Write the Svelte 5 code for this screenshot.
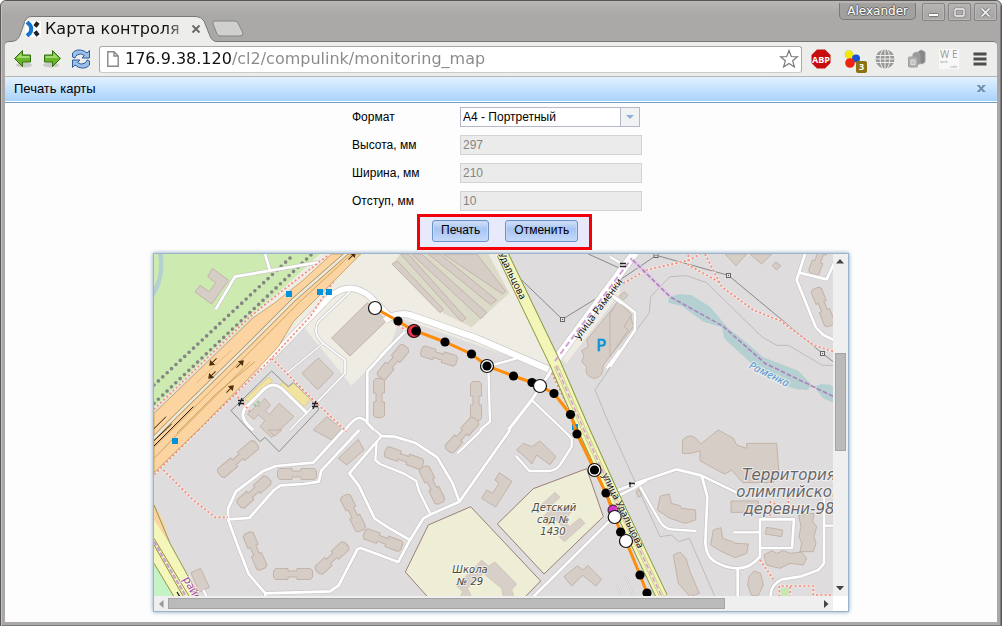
<script>
  const tiles = { A: [150, 250], B: [380, 250], C: [610, 250], D: [150, 430], E: [380, 430], F: [610, 430] };
  const place = (t) => `translate(${tiles[t][0]} ${tiles[t][1]}) scale(0.33333)`;

  const areas = [
    ['A', 'M12 12H510L400 115L310 198L12 480Z', '#cdebb0'],
    ['A', 'M12 12H38Q48 90 12 140Z', '#b5d0d0'],
    ['A', 'M12 12H24Q34 70 12 110Z', '#cdebb0'],
    ['A', 'M510 12H1045L1210 365L750 205L720 290L605 407L460 230L380 280L310 198L400 115Z', '#efece4'],
    ['B', 'M60 12H325L388 130L275 232L190 190L40 40Z', '#dcdac9'],
    ['B', 'M720 80L530 315L560 340L720 130Z', '#efece4'],
    ['C', 'M178 140L210 132L245 136L300 170L340 218L355 235L400 270L460 322L565 362L606 405L592 420L560 418L520 405L460 372L380 300L342 265L336 232L280 215L245 190L215 168L174 158Z', '#b4d0d0'],
    ['C', 'M612 410L635 402L660 404L680 415V462L640 445Z', '#b4d0d0'],
    ['D', 'M12 260L60 340L150 500H70L12 400Z', '#f4f6bb'],
    ['D', 'M12 225L42 275L55 335L12 270Z', '#fcd4a2'],
    ['D', 'M12 400L70 500H12Z', '#c6f3c6']
  ];

  const buildings = [
    ['A', 'M187 55L236 91L185 162L135 126L150 106L178 125L197 98L173 80Z'],
    ['A', 'M545 264L652 158L710 212L600 318Z'],
    ['A', 'M456 370L505 324L551 370L503 419Z'],
    ['A', 'M345 446L361 465L346 483L358 494L387 460L432 500L365 562L330 530L345 512L325 494L312 508L292 492Z'],
    ['A', 'M490 540L530 500L575 535L545 570Z'],
    ['B', 'M52 33L190 178L180 188L36 42Z'],
    ['B', 'M62 12H85L258 205L245 215Z'],
    ['B', 'M95 12H125L320 188L303 206Z'],
    ['B', 'M145 12H180L350 150L332 164Z'],
    ['B', 'M190 12H290L377 124L368 132Z'],
    ['B', 'M715 155L750 190L760 230L670 345Q670 385 640 385Q612 378 620 350L605 335L612 320L605 302L625 290L620 270Z'],
    ['C', 'M25 150L65 195L42 230L55 240L0 320V190Z'],
    ['C', 'M42 125L54 136L40 150L29 138Z'],
    ['C', 'M345 12H410L378 47Z'],
    ['C', 'M420 12H485L455 42Z'],
    ['C', 'M497 36L512 47L500 60L487 47Z'],
    ['D', 'M565 85L625 28L642 60L590 105Z'],
    ['D', 'M123 428L152 415L178 472L148 486Z'],
    ['D', 'M355 0L375 18L395 0Z'],
    ['E', 'M410 60L430 40L455 50L480 33L528 80L510 104L470 75L455 102L435 80Z'],
    ['E', 'M358 128L396 154L347 231L305 205L320 180L338 190L357 160L345 150Z'],
    ['E', 'M552 440L592 407L608 420L624 407L665 448L648 468L608 436L575 468Z'],
    ['F', 'M218 30Q245 0 272 42L325 0L370 25L380 45L410 55V40H500L507 130L490 158H398L365 120L345 132L330 125L270 92V62L245 70H217Z'],
    ['F', 'M363 213H445V247H363Z'],
    ['F', 'M151 198L178 192L184 220L212 228L215 235L257 240V270L225 280L180 265L142 240Z'],
    ['F', 'M310 300L333 293L338 325L368 335L375 340L415 342L410 370L375 383L330 362L302 345Z'],
    ['F', 'M190 375L210 366L228 385L240 425L268 490L240 500L205 460Z'],
    ['F', 'M417 440L432 423L452 430L460 465L445 497H425L413 465Z'],
    ['F', 'M470 292L518 300L515 320L466 312Z'],
    ['F', 'M566 255L612 250L608 275L620 290L612 320L618 340L610 365H570L575 340L567 320L573 290Z'],
    ['F', 'M462 375L485 362L500 370L520 362L540 370L575 366L590 385L580 405L540 400L510 415L470 405Z'],
    ['F', 'M78 184L88 180L95 196L85 202Z']
  ];

  const blocks = [
    [379, 398, 39, 90], [393, 362, 40, -50], [439, 356, 37, 17], [476, 401, 39, 90], [462, 435, 42, -48],
    [404, 458, 40, 20], [432, 485, 40, 64], [254, 492, 40, -42], [297, 474, 39, 0], [255, 551, 39, 67],
    [293, 574, 39, 0], [332, 558, 40, -43], [353, 513, 39, 64], [383, 540, 40, 20], [238, 459, 48, -40],
    [823, 307, 40, 68], [819, 258, 34, 110]
  ];

  const roads = [
    ['A', 'M197 178L255 80L360 62L545 30', 8], ['A', 'M345 12L360 62', 8],
    ['A', 'M330 355L400 285L540 140Q600 90 660 140L720 200', 17],
    ['A', 'M600 125L505 215Q485 250 520 280L585 330V370L420 540', 5], ['A', 'M520 280L410 370', 4],
    ['A', 'M310 540Q260 500 290 470L345 415Q370 395 395 415L472 490', 9],
    ['A', 'M720 290L652 365V515L635 505Q620 495 585 540', 8], ['A', 'M648 515L672 540', 8],
    ['B', 'M15 212Q50 185 90 195L290 265L505 358', 19], ['B', 'M0 320L75 245', 8],
    ['B', 'M525 340L505 375L455 450L385 540', 9], ['B', 'M455 450L550 540', 7],
    ['B', 'M325 355L330 515L300 540', 7], ['B', 'M320 350L410 325', 7], ['B', 'M520 340L765 8', 24],
    ['B', 'M680 355L720 300', 8], ['B', 'M690 135L725 160', 7],
    ['C', 'M0 130L75 188V240L0 350', 8], ['C', 'M0 20L30 38', 7],
    ['C', 'M585 12L560 90L618 233L640 255L672 270', 8], ['C', 'M567 68L650 88L672 40', 8],
    ['D', 'M580 0L490 98L378 108L338 124L258 184L234 236V268L264 350L296 432L346 490L540 484L566 466L622 358L632 354L745 396L780 330', 8],
    ['D', 'M234 268L298 264L372 180L392 166L460 162L506 155L514 122L628 0', 8],
    ['D', 'M680 35L598 130L626 166L674 266L720 296L780 330', 8],
    ['D', 'M675 0L695 18L680 35L676 90L690 102L760 130L798 152L808 185L840 250', 7],
    ['D', 'M346 490V500', 8], ['D', 'M160 480L170 500', 7],
    ['E', 'M0 18L45 20L105 38L172 82L218 160L238 215', 8],
    ['E', 'M90 330L130 265L148 255L238 215L390 0', 8], ['E', 'M305 0L232 70', 7],
    ['E', 'M550 0L575 25V50L540 105Q525 124 500 123H448L408 78', 7], ['E', 'M460 500L700 262', 8],
    ['F', 'M0 190L90 155L200 118L275 137L385 190', 8],
    ['F', 'M275 137L292 200L286 340Q290 380 312 393Q345 415 385 415Q420 415 450 380V268H552L546 354H450', 8],
    ['F', 'M450 307H370', 7], ['F', 'M383 415V500', 8], ['F', 'M90 170L150 275Q165 298 185 298L258 303', 7],
    ['F', 'M0 210L70 175L110 150', 8], ['F', 'M642 200V400L625 420L570 440L515 448Q480 465 482 500', 8],
    ['F', 'M642 287H672', 7], ['F', 'M20 465L35 500', 2], ['F', 'M45 440L70 495', 2]
  ];

  const redPaths = [
    ['A', 'M12 478L300 200L400 120L535 15'], ['A', 'M145 540L320 370L365 325L480 200L550 95'],
    ['A', 'M365 325L500 460L590 545'], ['A', 'M255 430L300 485'],
    ['D', 'M145 0L12 135'], ['D', 'M40 120L130 210L195 262H234'],
    ['C', 'M40 100L110 60L240 30L270 12M285 12L335 110L430 180L510 212L610 285L672 305M235 15V45L325 95'],
    ['B', 'M515 370L598 540'], ['B', 'M55 225L75 240'],
    ['F', 'M450 390L490 448M508 500V468H610V495H672M535 200V225M540 470V497M478 215L505 225M480 225V260']
  ];

  const greyLines = [
    ['B', 'M425 90L547 208L690 120', '#8a8a8a', 3], ['C', 'M0 110L139 16L355 76L637 310L672 337', '#8a8a8a', 3],
    ['B', 'M625 12L720 55', '#8a8a8a', 3],
    ['C', 'M80 240L118 188L122 140L180 80L230 77L290 98L455 260L500 286H535L637 346H672', '#bdbbbb', 3],
    ['A', 'M243 482L365 363L415 410L430 397L505 470V480L387 605L345 562L330 575Z', '#8f8f8f', 3],
    ['F', 'M5 0L150 320L185 315L205 335L238 325L315 500', '#bdbbbb', 3],
    ['B', 'M720 310L645 420L695 540', '#bdbbbb', 3]
  ];

  const route = [
    [375, 308, 'open'], [398, 321, 'dot'], [414, 331, 'red'], [416, 331, 'dot'], [445, 342, 'dot'], [471.5, 354, 'dot'],
    [487, 366, 'ring'], [513.5, 376, 'dot'], [532, 382.5, 'dot'], [540, 386, 'open'], [554, 393.5, 'dot'],
    [570.5, 414.5, 'dot'], [577, 434, 'dot'], [594.5, 470, 'ring'], [606, 493, 'dot'], [614.7, 517, 'open'],
    [620.6, 532, 'dot'], [626, 541, 'open'], [640, 575, 'dot'], [647, 593, 'dot']
  ];
  const line = route.map((p) => `${p[0]},${p[1]}`).join(' ');
  const arrows = [[213, 362, 135], [240, 364, -45], [212, 375, 135], [230, 389, -45], [352, 256, -45]];
  const stops = [[289, 294], [320, 292], [329, 292], [175, 441]];
  const pylons = [[562.5, 319.5], [656, 255.5], [728.5, 275.5], [822.5, 353.5]];

  const fields = [
    { id: 'height', label: 'Высота, мм', value: '297' },
    { id: 'width', label: 'Ширина, мм', value: '210' },
    { id: 'margin', label: 'Отступ, мм', value: '10' }
  ];
</script>

<div class="window">
  <header class="titlebar">
    <div class="tab">
      <svg class="tab-shape" viewBox="0 0 206 26" aria-hidden="true">
        <path d="M0 25.500C6 25 7 23 9 19L14 5Q16 .5 21 .5H185Q190 .5 193 5L199 20Q201 25.500 206 25.500V26H0Z" fill="#ededeb" />
        <path d="M0 25.500C6 25 7 23 9 19L14 5Q16 .5 21 .5H185Q190 .5 193 5L199 20Q201 25.500 206 25.500" fill="none" stroke="#777" />
      </svg>
      <svg class="favicon" width="16" height="16" viewBox="0 0 16 16" aria-hidden="true">
        <rect width="16" height="16" fill="#fff" />
        <path d="M2 1L5 4Q7.500 8 5 12L2 15" fill="none" stroke="#1674d1" stroke-width="4" />
        <path d="M13 1.500L10 5.500M10 10.500L13 14.500" stroke="#222" stroke-width="4" />
      </svg>
      <span class="tab-title">Карта контроля у</span>
      <button class="tab-close" aria-label="Закрыть вкладку"><svg width="10" height="10" viewBox="0 0 10 10"><path d="M1.500 1.500L8.500 8.500M8.500 1.500L1.500 8.500" stroke="#666" stroke-width="1.800" /></svg></button>
    </div>
    <button class="new-tab" aria-label="Новая вкладка">
      <svg width="32" height="17" viewBox="0 0 32 17"><path d="M3 1H22Q25 1 26 3L31 13Q31 16 28 16H9Q6 16 5 14L1 4Q0 1 3 1Z" fill="#d0d0ce" stroke="#858583" /></svg>
    </button>
    <div class="window-controls">
      <button class="user">Alexander</button>
      <button class="wm" aria-label="Свернуть"><svg width="13" height="13"><rect x="1.500" y="7.500" width="10" height="3" rx="1" fill="#fff" stroke="#777" /></svg></button>
      <button class="wm" aria-label="Развернуть"><svg width="13" height="13"><rect x="2" y="3" width="9" height="7" rx="1" fill="none" stroke="#858585" stroke-width="3" /><rect x="2" y="3" width="9" height="7" rx="1" fill="none" stroke="#f4f4f4" stroke-width="1.300" /></svg></button>
      <button class="wm" aria-label="Закрыть"><svg width="13" height="13"><path d="M2.500 2.500L10.500 10.500M10.500 2.500L2.500 10.500" stroke="#858585" stroke-width="3.600" /><path d="M2.500 2.500L10.500 10.500M10.500 2.500L2.500 10.500" stroke="#f4f4f4" stroke-width="1.700" /></svg></button>
    </div>
  </header>

  <nav class="toolbar">
    <button class="tool" aria-label="Назад"><svg width="20" height="20" viewBox="0 0 20 20"><ellipse cx="11" cy="16" rx="8" ry="2.500" fill="#c9c9c7" /><path d="M1.500 9.500L9.500 1.500V6H17.500V13H9.500V17.500Z" fill="#68b52a" stroke="#2f6e0a" /><path d="M3.500 9L8.500 4V7H16.500V9Z" fill="#a5da70" /></svg></button>
    <button class="tool" aria-label="Вперёд"><svg width="20" height="20" viewBox="0 0 20 20"><ellipse cx="9" cy="16" rx="8" ry="2.500" fill="#c9c9c7" /><path d="M18.500 9.500L10.500 1.500V6H2.500V13H10.500V17.500Z" fill="#68b52a" stroke="#2f6e0a" /><path d="M16.500 9L11.500 4V7H3.500V9Z" fill="#a5da70" /></svg></button>
    <button class="tool" aria-label="Обновить"><svg width="20" height="20" viewBox="0 0 20 20" stroke="#2e5c9e" stroke-linejoin="round"><path d="M1.500 8V4Q6 -1 13 2L16 4L18.500 1.500V9H11L13.500 6.500Q10 3.500 6 6Q4.500 7 4 9Z" fill="#9cbfe8" /><path d="M18.500 12V16Q14 21 7 18L4 16L1.500 18.500V11H9L6.500 13.500Q10 16.500 14 14Q15.500 13 16 11Z" fill="#9cbfe8" /></svg></button>
    <div class="address">
      <svg width="12" height="16" viewBox="0 0 12 16" aria-hidden="true"><path d="M.8 .8H7L11.200 5V15.200H.8ZM7 .8V5H11.200" fill="#fff" stroke="#888" stroke-width="1.400" /></svg>
      <input aria-label="Адрес" value="176.9.38.120/cl2/compulink/monitoring_map" />
      <button class="tool" aria-label="В закладки"><svg width="20" height="20" viewBox="0 0 20 20"><path d="M10 1.500L12.300 7.500L18.500 7.800L13.700 11.800L15.400 18L10 14.500L4.600 18L6.300 11.800L1.500 7.800L7.700 7.500Z" fill="#fff" stroke="#777" stroke-width="1.200" /></svg></button>
    </div>
    <div class="extensions">
      <button class="tool" aria-label="ABP"><svg width="20" height="20" viewBox="0 0 20 20"><path d="M6 .5H14L19.500 6V14L14 19.500H6L.5 14V6Z" fill="#c70d0d" /><text x="10" y="13.500" text-anchor="middle" font-family="Open Sans" font-weight="700" font-size="9" fill="#fff">ABP</text></svg></button>
      <button class="tool balls" aria-label="Цветные шары"><svg width="20" height="20" viewBox="0 0 20 20"><circle cx="6" cy="5.500" r="4.200" fill="#f2ea00" stroke="#c8c8a0" stroke-width=".5" /><circle cx="13" cy="9.500" r="4" fill="#1754d1" /><circle cx="7" cy="14" r="4.800" fill="#ef2410" /></svg><span>3</span></button>
      <button class="tool" aria-label="Глобус"><svg width="20" height="20" viewBox="0 0 20 20"><circle cx="10" cy="10" r="9.500" fill="#999" /><path d="M1 6.500H19M0 10H20M1 13.500H19M10 0V20M8 0Q2 10 8 20M12 0Q18 10 12 20" fill="none" stroke="#ededeb" /></svg></button>
      <button class="tool" aria-label="Страницы"><svg width="20" height="20" viewBox="0 0 20 20" stroke="#a0a0a0"><path d="M11 3L14 1L18 3V13L15 15L11 13Z" fill="#858585" /><path d="M6 5L9 3L13 5V15H6Z" fill="#9a9a9a" /><rect x="1.500" y="8" width="9" height="10" rx="1" fill="#b0b0b0" /><path d="M4 11H8V15.500H4Z" fill="#c4c4c4" stroke="#ddd" /></svg></button>
      <button class="tool" aria-label="WE web edit"><svg width="20" height="20" viewBox="0 0 20 20"><rect width="20" height="20" fill="#f8f8f8" /><g font-family="Open Sans" fill="#999"><text x="1" y="9" font-size="10">W</text><text x="13" y="9" font-size="10">E</text><text x="1" y="14" font-size="4">web</text><text x="11" y="19" font-size="4">edit</text></g></svg></button>
      <button class="tool menu" aria-label="Меню"><svg width="14" height="14" viewBox="0 0 14 14"><path d="M.5 2H13.500M.5 7H13.500M.5 12H13.500" stroke="#4d4d4d" stroke-width="3" /></svg></button>
    </div>
  </nav>

  <main class="page">
    <div class="panel-head">
      <h1>Печать карты</h1>
      <button class="panel-close" aria-label="Закрыть"><svg width="9" height="7" viewBox="0 0 9 7"><path d="M1.500 .5L7 6.500M7 .5L1.500 6.500" stroke="#6d93b3" stroke-width="2" /><path d="M0 .5H3M5.500 .5H8.500M0 6.500H3M5.500 6.500H8.500" stroke="#6d93b3" /></svg></button>
    </div>

    <form class="form" onsubmit={(e) => e.preventDefault()}>
      <label for="format">Формат</label>
      <div class="select">
        <select id="format"><option>A4 - Портретный</option></select>
        <span class="drop"></span>
      </div>
      {#each fields as f}
        <label for={f.id}>{f.label}</label>
        <input id={f.id} value={f.value} disabled />
      {/each}
      <div class="actions">
        <button type="submit">Печать</button>
        <button type="button">Отменить</button>
      </div>
    </form>

    <section class="map-frame" aria-label="Карта">
      <svg class="map" viewBox="154 254 679 342" preserveAspectRatio="xMinYMin slice">
        <rect x="154" y="254" width="679" height="342" fill="#dedcdd" />
        {#each areas as [t, d, fill]}<path {d} {fill} transform={place(t)} />{/each}
        <g transform={place('A')}>
          <path d="M12 405L430 15M12 460L490 8" fill="none" stroke="#858585" stroke-width="11" stroke-linecap="round" stroke-dasharray="0 18" />
        </g>
        <g fill="#f2e3a0" stroke="#d8c66c" stroke-width="2" transform={place('A')}>
          <path d="M285 448L355 382L368 392L298 458ZM390 405L400 396L415 412L432 400L482 448L462 470L412 425Z" />
        </g>
        <g fill="#eeeed6" stroke="#9b7f75" stroke-width="3" transform={place('E')}>
          <path d="M272 230L145 285L76 426L145 503H433L482 453Z" />
          <path d="M352 282L460 176L620 116L670 260L492 432Z" />
          <path d="M470 238L525 187L540 202L515 225L530 245L570 222L582 235L555 270L568 290L600 264L615 280L553 335L538 320L555 302L530 270L500 285L488 262L505 245L490 232L475 248Z" fill="#d8d0c8" stroke="#cbbcae" stroke-width="2" />
          <path d="M230 468L305 390L325 408L345 396L410 462L395 480L402 500H370L365 475L310 430L262 475L275 500H240L248 485Z" fill="#d8d0c8" stroke="#cbbcae" stroke-width="2" />
        </g>
        {#each greyLines as [t, d, stroke, w]}<path {d} {stroke} stroke-width={w} fill="none" transform={place(t)} />{/each}
        <g fill="#d7cdc7" stroke="#c3b3a8">
          {#each buildings as [t, d]}<path {d} stroke-width="3" transform={place(t)} />{/each}
          {#each blocks as [x, y, len, a]}
            <path transform={`translate(${x} ${y}) rotate(${a})`} d={`M${-len / 2 + 2} -5.500H-5V-3H4V-5.500H${len / 2 - 2}L${len / 2} -3V3L${len / 2 - 2} 5.500H4V3H-5V5.500H${-len / 2 + 2}L${-len / 2} 3V-3Z`} />
          {/each}
        </g>
        <g fill="none" stroke-linejoin="round">
          {#each roads as [t, d, w]}<path {d} stroke="#c9c7c7" stroke-width={w + 4} transform={place(t)} />{/each}
          {#each roads as [t, d, w]}<path {d} stroke="#fff" stroke-width={w} transform={place(t)} />{/each}
          {#each redPaths as [t, d]}<path {d} stroke="#f7ece8" stroke-width="9" stroke-opacity=".6" transform={place(t)} />{/each}
          {#each redPaths as [t, d]}<path {d} stroke="#f58a7b" stroke-width="5" stroke-dasharray="6 7" transform={place(t)} />{/each}
        </g>
        <g transform={place('A')} fill="none" stroke="#b58d3c" stroke-width="2">
          <path d="M545 12L460 90L375 158L310 203L12 490V668L150 535L320 360L385 290L430 215L540 105L632 12Z" fill="#fcd4a2" />
          <path d="M592 8L430 150L290 290L60 515L8 568" stroke="#a08a50" stroke-width="12" />
          <path d="M592 8L430 150L290 290L60 515L8 568" stroke="#eee9dc" stroke-width="8" />
          <path d="M605 12L450 155L300 305L85 520L12 592M300 335L90 545L12 625M315 335L200 430L80 550" />
          <path d="M245 300L140 398" stroke="#dcae68" />
          <path d="M48 500L0 548M130 470L0 600M65 522L0 583" stroke="#2a1a08" stroke-width="3" />
        </g>
        <g transform={place('D')} fill="none" stroke="#8f9640" stroke-width="3">
          <path d="M12 325L118 500M12 345L100 500M12 400L72 500M12 225L60 340L148 500" />
          <path d="M12 335L108 500" stroke="#cf9fd0" stroke-width="7" stroke-dasharray="14 5" />
        </g>
        <g fill="none">
          <path d="M502.500 254L555 363L584 430L613 494L662 597" stroke="#8c9a45" stroke-width="12" />
          <path d="M502.500 254L555 363L584 430L613 494L662 597" stroke="#f3f6b8" stroke-width="10" />
          <path d="M556 366L584 430L613 494L662 597" stroke="#b9c07a" stroke-width="4.600" />
          <path d="M556 366L584 430L613 494L662 597" stroke="#eeeec0" stroke-width="3.400" />
          <path d="M556 366L584 430L613 494L662 597" stroke="#d7a3c4" stroke-width="1.600" stroke-dasharray="5 2.500" />
          <path d="M555 361L632 258" stroke="#d3a4d6" stroke-width="2" stroke-dasharray="6 3" />
        </g>
        <g transform={place('C')} fill="none">
          <path d="M68 30L180 140" stroke="#e3cce5" stroke-width="13" stroke-dasharray="8 3" />
          <path d="M68 30L180 140L338 228L465 340L610 410L675 442" stroke="#b07fc0" stroke-width="5" stroke-dasharray="14 6" />
        </g>
        {#each pylons as [x, y]}<g><rect x={x - 2} y={y - 2} width="4" height="4" fill="#eee" stroke="#666" /><circle cx={x} cy={y} r=".7" fill="#555" /></g>{/each}
        <path d="M238 400.500H244M238 403.500H244M242 398L239 406M312 403.500H318M312 406.500H318M316 401L313 409M620 263.500H626M620 266.500H626M630 487V482M629 483.500H635M177 592L180 597" stroke="#222" stroke-width="1.300" />
        {#each stops as [x, y]}<rect x={x - 3} y={y - 3} width="6" height="6" fill="#0092da" />{/each}
        {#each arrows as [x, y, a]}<path transform={`translate(${x} ${y}) rotate(${a})`} d="M-5 0H2M1 -2.500L4.500 0L1 2.500Z" fill="#4a2d08" stroke="#4a2d08" />{/each}
        <rect x="572" y="424" width="6" height="6" fill="#0092da" />
        <circle cx="785" cy="592" r="4.500" fill="#c8e6af" />
        <g fill="#9cc7a0"><circle cx="255" cy="405" r="1.500" /><circle cx="258" cy="402" r="1.500" /><circle cx="259" cy="406" r="1" /></g>

        <g class="labels">
          <text x="601" y="351" class="parking" text-anchor="middle">P</text>
          <text transform="translate(498 254) rotate(64)" class="street">Удальцова</text>
          <text transform="translate(579 340) rotate(-53)" class="street">улица Раменки</text>
          <text transform="translate(748 368) rotate(26)" class="river">Раменка</text>
          <text transform="translate(183 579) rotate(62)" class="district">район</text>
          <g class="place" text-anchor="middle">
            <text x="554" y="511">Детский</text><text x="553" y="523">сад №</text><text x="553" y="535">1430</text>
            <text x="470" y="573">Школа</text><text x="470" y="585">№ 29</text>
          </g>
          <g class="area" text-anchor="middle">
            <text x="789" y="480">Территория</text><text x="789" y="497">олимпийской</text><text x="789" y="514">деревни-98</text>
          </g>
        </g>

        <polyline points={line} fill="none" stroke="#ff8c0a" stroke-width="3" />
        <circle cx="613" cy="510" r="5" fill="#d633c8" stroke="#222" />
        {#each route as [x, y, kind]}
          {#if kind === 'dot'}<circle cx={x} cy={y} r="4.600" />
          {:else if kind === 'open'}<circle cx={x} cy={y} r="6.500" fill="#fff" stroke="#111" stroke-width="1.200" />
          {:else if kind === 'red'}<circle cx={x} cy={y} r="6.500" fill="#f5334a" stroke="#111" stroke-width="1.200" />
          {:else}<circle cx={x} cy={y} r="6.500" fill="#fff" stroke="#111" stroke-width="1.200" /><circle cx={x} cy={y} r="4.600" />{/if}
        {/each}
        <g class="labels"><text transform="translate(602 475) rotate(64)" class="street">улица Удальцова</text></g>
      </svg>

      <div class="bar vertical">
        <button aria-label="Вверх"><svg width="8" height="5"><path d="M4 0L8 4.500H0Z" fill="#444" /></svg></button>
        <div class="track"><div class="thumb"></div></div>
        <button aria-label="Вниз"><svg width="8" height="5"><path d="M0 0H8L4 4.500Z" fill="#444" /></svg></button>
      </div>
      <div class="bar horizontal">
        <button aria-label="Влево"><svg width="5" height="8"><path d="M4.500 0V8L0 4Z" fill="#999" /></svg></button>
        <div class="track"><div class="thumb"></div></div>
        <button aria-label="Вправо"><svg width="5" height="8"><path d="M0 0V8L4.500 4Z" fill="#444" /></svg></button>
      </div>
    </section>
  </main>
</div>

<style>
  :global(body) { background: #fff; }
  * { box-sizing: border-box; }
  button { padding: 0; border: 0; background: none; font: inherit; color: inherit; }
  svg { display: block; flex: none; }
  .window {
    display: flex;
    flex-direction: column;
    min-height: 100vh;
    padding: 0 4px 4px;
    background: #aaa9a7;
    border: 1px solid #5b5757;
    border-radius: 6px 6px 0 0;
    box-shadow: inset 0 1px #d2d0d0, inset 1px 0 #c4c2c2, inset -1px -1px #7c7a7a;
    font-family: "Liberation Sans", sans-serif;
  }
  .titlebar {
    display: flex;
    align-items: flex-end;
    height: 40px;
    margin: 0 -3px;
    padding: 0 3px;
    background: linear-gradient(#b9b6b6, #aaa9a7 14px);
    border-radius: 5px 5px 0 0;
  }
  .tab {
    position: relative;
    display: flex;
    align-items: center;
    width: 206px;
    height: 25px;
    margin-left: 6px;
    padding: 0 10px 0 14px;
    z-index: 1;
  }
  .tab-shape { position: absolute; left: 0; top: 0; width: 206px; height: 26px; }
  .favicon, .tab-title, .tab-close { position: relative; }
  .tab-title {
    width: 138px;
    margin-left: 4px;
    overflow: hidden;
    white-space: nowrap;
    font: 16px/22px "DejaVu Sans", sans-serif;
    color: #111;
    -webkit-mask-image: linear-gradient(90deg, #000 120px, transparent 148px);
    mask-image: linear-gradient(90deg, #000 120px, transparent 148px);
  }
  .tab-close { margin-left: 8px; }
  .new-tab { margin: 0 0 4px -5px; }
  .window-controls { display: flex; align-self: flex-start; gap: 3px; margin: 2px 0 0 auto; }
  .user {
    height: 17px;
    padding: 0 7px;
    margin-right: 3px;
    border: 1px solid #7b7979;
    border-top: 0;
    border-radius: 0 0 5px 5px;
    background: #a2a19f;
    color: #fff;
    font: 12px/16px "DejaVu Sans", sans-serif;
    text-shadow: 1px 0 #666, -1px 0 #666, 0 1px #666, 0 -1px #666;
  }
  .wm {
    display: flex;
    align-items: center;
    justify-content: center;
    width: 23px;
    height: 18px;
    border: 1px solid #858383;
    border-radius: 2px;
    box-shadow: inset 0 0 0 1px #b9b8b6;
  }
  .toolbar {
    display: flex;
    align-items: center;
    gap: 9px;
    height: 36px;
    padding: 0 10px 0 8px;
    background: #ededeb;
    border-top: 1px solid #777;
    border-bottom: 1px solid #b4b4b2;
    border-radius: 4px 4px 0 0;
  }
  .address {
    display: flex;
    flex: 1;
    align-items: center;
    gap: 6px;
    height: 27px;
    margin-left: -1px;
    padding: 0 2px 0 7px;
    border: 1px solid #aaa9a7;
    border-bottom-color: #cbcbc9;
    border-radius: 3px;
    background: #fff;
  }
  .address input {
    flex: 1;
    min-width: 0;
    padding: 0;
    border: 0;
    font: 16px/22px "DejaVu Sans", sans-serif;
    color: transparent;
    background: linear-gradient(90deg, #111 107px, #888 107px);
    -webkit-background-clip: text;
    background-clip: text;
  }
  .extensions { display: flex; align-items: center; gap: 12px; }
  .balls { position: relative; }
  .balls span {
    position: absolute;
    left: 13px;
    top: 12px;
    width: 11px;
    height: 12px;
    border-radius: 2px;
    background: #8b7312;
    color: #fff;
    font: 700 9px/12px "Open Sans", sans-serif;
    text-align: center;
  }
  .menu { margin-left: 2px; }
  .page {
    flex: 1;
    padding-bottom: 10px;
    background: #fdfdfd;
  }
  .panel-head {
    display: flex;
    align-items: center;
    justify-content: space-between;
    height: 26px;
    padding: 0 11px 2px 9px;
    background: linear-gradient(#e2f1ff, #a9d3fc 24px, #fff 24px);
    border-bottom: 1px solid #6f9cc2;
  }
  h1 { margin: 0; font: 13px/23px "Liberation Sans", sans-serif; color: #000; }
  .form {
    display: grid;
    grid-template-columns: 108px 182px;
    row-gap: 8px;
    align-items: center;
    width: 298px;
    margin: 4px auto 3px;
    font-size: 12px;
    line-height: 20px;
  }
  .form input, .select {
    height: 20px;
    padding: 0 2px;
    border: 1px solid #d3d3d3;
    background: #ebebeb;
    color: #858585;
    font: 12px/18px "Liberation Sans", sans-serif;
  }
  .select {
    position: relative;
    width: 180px;
    padding: 0;
    border-color: #b5b8c8;
    background: #fff;
  }
  select {
    width: 100%;
    height: 18px;
    padding: 0 2px;
    border: 0;
    appearance: none;
    background: none;
    color: #000;
    font: inherit;
  }
  .drop {
    position: absolute;
    top: 0;
    right: 0;
    display: flex;
    align-items: center;
    justify-content: center;
    width: 19px;
    height: 18px;
    border-left: 1px solid #b5b8c8;
    background: #f0f2f4;
    pointer-events: none;
  }
  .drop::after { content: ""; border: 4px solid transparent; border-top-color: #8fb0d0; border-bottom: 0; }
  .actions {
    grid-column: 1 / -1;
    display: flex;
    gap: 16px;
    width: 175px;
    height: 36px;
    margin: -5px 0 0 65px;
    padding: 3px 12px;
    border: 3px solid #f50008;
    background: #e8e9fb;
  }
  .actions button {
    height: 22px;
    padding: 0 8px 2px;
    border: 1px solid #6d94c6;
    border-radius: 3px;
    background: linear-gradient(#d4e2fa, #a8c4f3 40%, #c5dafa);
    box-shadow: inset 0 0 0 1px #c4d8f8;
    line-height: 18px;
    white-space: nowrap;
  }
  .map-frame {
    display: grid;
    grid-template-columns: minmax(0, 1fr) 15px;
    grid-template-rows: auto 15px;
    max-width: 696px;
    margin: 0 auto;
    border: 1px solid #9bb4cb;
    background: #fff;
    box-shadow: 0 0 4px #7f9fbd;
  }
  .map { width: 100%; height: auto; }
  .labels { font-family: "Noto Sans", sans-serif; paint-order: stroke; stroke: #fff; stroke-opacity: .6; stroke-width: 2px; stroke-linejoin: round; }
  .street { font-size: 10px; fill: #111; stroke-width: 1px; }
  .river { font-size: 11px; font-style: italic; fill: #5c97cf; }
  .district { font-size: 11px; fill: #a347a8; }
  .parking { font: 16px "DejaVu Sans", sans-serif; fill: #0092da; stroke: #0092da; stroke-width: 1px; }
  .place { font: italic 10px "DejaVu Sans", sans-serif; fill: #4d4d3c; }
  .area { font: italic 15px "DejaVu Sans", sans-serif; fill: #666; }
  .bar { display: flex; background: #efefef; }
  .bar button { display: flex; align-items: center; justify-content: center; width: 14px; height: 15px; }
  .vertical { flex-direction: column; }
  .track { flex: 1; display: flex; }
  .vertical .track { flex-direction: column; padding: 0 2px; }
  .vertical .track::before { content: ""; flex: 85; }
  .vertical .thumb { flex: 96; }
  .vertical .track::after { content: ""; flex: 131; }
  .horizontal .track { padding: 2px 0; }
  .horizontal .thumb { flex: 557; }
  .horizontal .track::after { content: ""; flex: 94; }
  .thumb { border: 1px solid #a5a5a5; background: #bababa; }
</style>
